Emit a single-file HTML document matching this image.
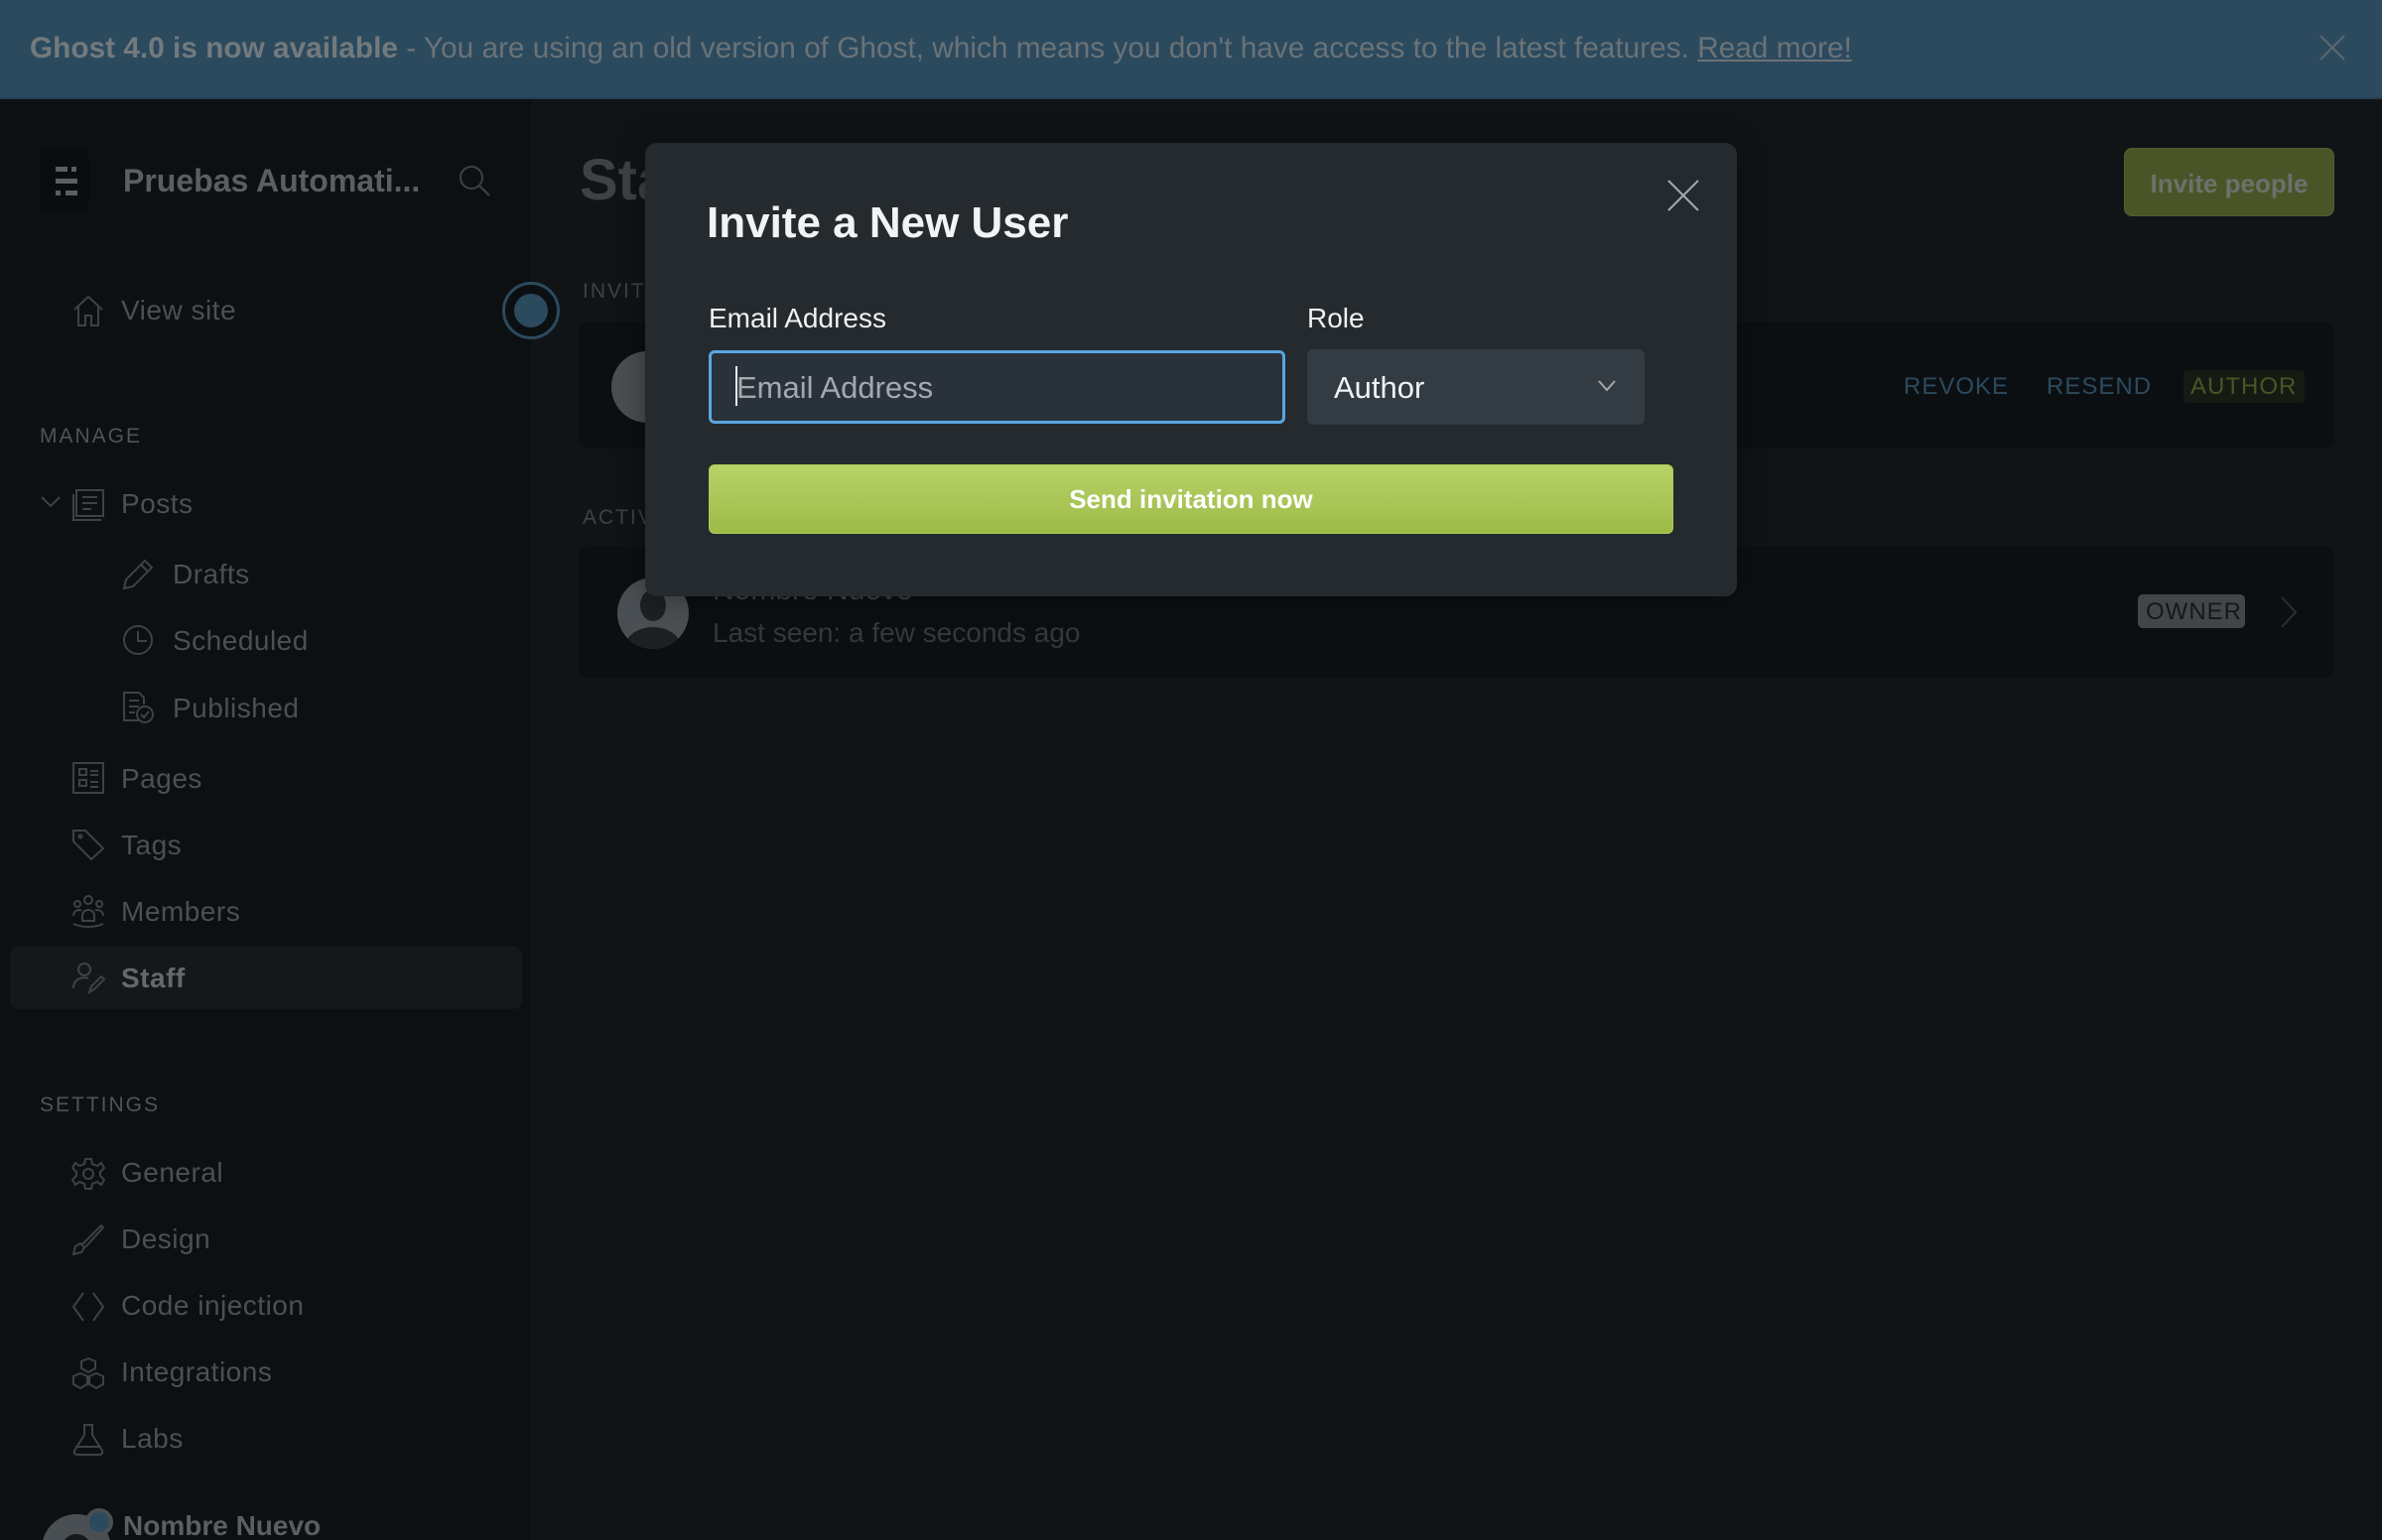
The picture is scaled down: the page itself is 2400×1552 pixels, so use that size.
<!DOCTYPE html>
<html><head><meta charset="utf-8"><style>
*{margin:0;padding:0;box-sizing:border-box}
html,body{width:2400px;height:1552px;overflow:hidden}
body{background:#101417;font-family:"Liberation Sans",sans-serif;position:relative}
.a{position:absolute;white-space:nowrap}
.banner{left:0;top:0;width:2400px;height:100px;background:#2c4a5e;border-bottom:2px solid #243f52}
.side{left:0;top:100px;width:535px;height:1452px;background:#0d1013}
.nav{font-size:28px;color:#4a5055;letter-spacing:.5px;line-height:34px}
.sec{font-size:21px;color:#4e5459;letter-spacing:2px}
svg.i{position:absolute;fill:none;stroke:#3c4247;stroke-width:2}
.card{background:#0c0f11;border-radius:10px}
#clip{position:absolute;left:0;top:0;width:2400px;height:1552px;overflow:hidden}
</style></head><body><div id="clip">
<div class="a banner"></div>
<div class="a" style="left:30px;top:32px;font-size:29.8px;color:#6a7377"><b style="color:#727a7d">Ghost 4.0 is now available</b> - You are using an old version of Ghost, which means you don't have access to the latest features. <u>Read more!</u></div>
<svg class="i" style="left:2336px;top:34px;stroke:#5b6870" width="28" height="28"><path d="M2 2L26 26M26 2L2 26"/></svg>

<div class="a side"></div>
<div class="a" style="left:40px;top:150px;width:50px;height:63px;background:#0a0c0e;border-radius:8px"></div>
<div class="a" style="left:56px;top:168px;width:12px;height:5px;background:#5a5f63"></div><div class="a" style="left:72px;top:168px;width:5px;height:5px;background:#5a5f63"></div>
<div class="a" style="left:56px;top:180px;width:22px;height:5px;background:#5a5f63"></div>
<div class="a" style="left:56px;top:192px;width:5px;height:5px;background:#5a5f63"></div><div class="a" style="left:66px;top:192px;width:12px;height:5px;background:#5a5f63"></div>
<div class="a" style="left:124px;top:164px;font-size:32px;font-weight:bold;color:#5a5f63">Pruebas Automati...</div>
<svg class="i" style="left:460px;top:164px" width="36" height="36"><circle cx="15" cy="15" r="11"/><path d="M23 23L33 33"/></svg>

<svg class="i" style="left:72px;top:296px" width="34" height="34"><path d="M3 16L17 3L31 16M7 13V32H14V22H20V32H27V13"/></svg>
<div class="a nav" style="left:122px;top:296px">View site</div>
<div class="a" style="left:506px;top:284px;width:58px;height:58px;border-radius:50%;border:3px solid #2c4a5e;background:#0c0f11"></div>
<div class="a" style="left:518px;top:296px;width:34px;height:34px;border-radius:50%;background:#2c4a5e"></div>

<div class="a sec" style="left:40px;top:428px">MANAGE</div>
<svg class="i" style="left:40px;top:498px" width="22" height="16"><path d="M2 3L11 12L20 3"/></svg>
<svg class="i" style="left:72px;top:492px" width="34" height="34"><rect x="5" y="2" width="27" height="26"/><path d="M2 6V32H30M11 9H26M11 15H26M11 21H20"/></svg>
<div class="a nav" style="left:122px;top:491px">Posts</div>
<svg class="i" style="left:122px;top:562px" width="34" height="34"><path d="M3 31L5 22L24 3L31 10L12 29ZM20 7L27 14"/></svg>
<div class="a nav" style="left:174px;top:562px">Drafts</div>
<svg class="i" style="left:122px;top:628px" width="34" height="34"><circle cx="17" cy="17" r="14"/><path d="M17 8V18H26"/></svg>
<div class="a nav" style="left:174px;top:629px">Scheduled</div>
<svg class="i" style="left:122px;top:696px" width="34" height="34"><path d="M18 30H3V2H18L23 7V14M8 10H18M8 16H18M8 22H14"/><circle cx="24" cy="24" r="8"/><path d="M20 24L23 27L28 21"/></svg>
<div class="a nav" style="left:174px;top:697px">Published</div>
<svg class="i" style="left:72px;top:767px" width="34" height="34"><rect x="2" y="2" width="30" height="30"/><rect x="8" y="8" width="7" height="6"/><rect x="8" y="19" width="7" height="6"/><path d="M19 10H27M19 14H27M19 21H27M19 26H27"/></svg>
<div class="a nav" style="left:122px;top:768px">Pages</div>
<svg class="i" style="left:72px;top:834px" width="34" height="34"><path d="M2 3H14L32 21L20 32L2 14Z"/><circle cx="9" cy="9" r="1.5"/></svg>
<div class="a nav" style="left:122px;top:835px">Tags</div>
<svg class="i" style="left:72px;top:901px" width="34" height="34"><circle cx="17" cy="6" r="4"/><circle cx="6" cy="10" r="3"/><circle cx="28" cy="10" r="3"/><path d="M11 22C11 14 23 14 23 22V27H11ZM2 22C2 16 9 15 10 17M32 22C32 16 25 15 24 17M2 30C10 34 24 34 32 30"/></svg>
<div class="a nav" style="left:122px;top:902px">Members</div>

<div class="a" style="left:10px;top:954px;width:516px;height:63px;background:#14181b;border-radius:8px"></div>
<svg class="i" style="left:72px;top:968px" width="34" height="34"><circle cx="13" cy="9" r="6"/><path d="M2 28C2 19 10 16 17 18M18 32L20 26L30 16L33 19L23 29Z"/></svg>
<div class="a nav" style="left:122px;top:969px;font-weight:bold;color:#65696c">Staff</div>

<div class="a sec" style="left:40px;top:1102px">SETTINGS</div>
<svg class="i" style="left:72px;top:1166px" width="34" height="34"><circle cx="17" cy="17" r="5"/><path d="M14 2H20L21 7L26 9L30 6L33 11L29 15V19L33 23L30 28L26 25L21 27L20 32H14L13 27L8 25L4 28L1 23L5 19V15L1 11L4 6L8 9L13 7Z"/></svg>
<div class="a nav" style="left:122px;top:1165px">General</div>
<svg class="i" style="left:72px;top:1232px" width="34" height="34"><path d="M2 32L4 24L9 21L13 25L10 30ZM11 22L30 3L32 5L14 25"/></svg>
<div class="a nav" style="left:122px;top:1232px">Design</div>
<svg class="i" style="left:72px;top:1300px" width="34" height="34"><path d="M12 3L2 17L12 31M22 3L32 17L22 31"/></svg>
<div class="a nav" style="left:122px;top:1299px">Code injection</div>
<svg class="i" style="left:72px;top:1367px" width="34" height="34"><path d="M17 2L24 5V12L17 16L10 12V5ZM9 17L16 20V28L9 32L2 28V20ZM25 17L32 20V28L25 32L18 28V20Z"/></svg>
<div class="a nav" style="left:122px;top:1366px">Integrations</div>
<svg class="i" style="left:72px;top:1434px" width="34" height="34"><path d="M12 2H22M13 2V12L3 28C2 31 4 32 6 32H28C30 32 32 31 31 28L21 12V2M4 24H30"/></svg>
<div class="a nav" style="left:122px;top:1433px">Labs</div>
<div class="a" style="left:42px;top:1526px;width:70px;height:70px;border-radius:50%;background:#4a4f53"></div>
<div class="a" style="left:62px;top:1546px;width:30px;height:30px;border-radius:50%;background:#16191c"></div>
<div class="a" style="left:86px;top:1520px;width:28px;height:28px;border-radius:50%;background:#2c4a5e;border:4px solid #4a4f53"></div>
<div class="a" style="left:124px;top:1522px;font-size:28px;font-weight:bold;color:#5a5f63">Nombre Nuevo</div>

<!-- main -->
<div class="a" style="left:584px;top:148px;font-size:58px;font-weight:bold;color:#3d4246">Staff</div>
<div class="a" style="left:2140px;top:149px;width:212px;height:69px;background:#4a5527;border-radius:8px;border:1px solid #525e2c"></div>
<div class="a" style="left:2140px;top:170px;width:212px;text-align:center;font-size:26px;font-weight:bold;color:#6c716d">Invite people</div>
<div class="a sec" style="left:587px;top:282px;color:#3c4246">INVITED USERS</div>
<div class="a card" style="left:583px;top:325px;width:1769px;height:127px"></div>
<div class="a" style="left:616px;top:354px;width:72px;height:72px;border-radius:50%;background:#4a4f53"></div>
<div class="a" style="left:1918px;top:376px;font-size:24px;color:#2c4a5e;letter-spacing:1px">REVOKE</div>
<div class="a" style="left:2062px;top:376px;font-size:24px;color:#2c4a5e;letter-spacing:1px">RESEND</div>
<div class="a" style="left:2200px;top:373px;width:122px;height:33px;background:#151a13;border-radius:4px"></div>
<div class="a" style="left:2207px;top:376px;font-size:24px;color:#4a5527;letter-spacing:1px">AUTHOR</div>
<div class="a sec" style="left:587px;top:510px;color:#3c4246">ACTIVE USERS</div>
<div class="a card" style="left:583px;top:551px;width:1769px;height:132px"></div>
<div class="a" style="left:622px;top:582px;width:72px;height:72px;border-radius:50%;background:#4a4f53;overflow:hidden"><div style="position:absolute;left:23px;top:12px;width:26px;height:32px;border-radius:50%;background:#1c2023"></div><div style="position:absolute;left:8px;top:50px;width:56px;height:40px;border-radius:50%;background:#1c2023"></div></div>
<div class="a" style="left:718px;top:578px;font-size:30px;color:#3d4246">Nombre Nuevo</div>
<div class="a" style="left:718px;top:622px;font-size:28px;color:#33383c">Last seen: a few seconds ago</div>
<div class="a" style="left:2154px;top:599px;width:108px;height:34px;background:#41464a;border-radius:5px"></div>
<div class="a" style="left:2162px;top:603px;font-size:24px;color:#15181a;letter-spacing:1px">OWNER</div>
<svg class="i" style="left:2296px;top:600px;stroke:#2a2f33" width="20" height="34"><path d="M3 2L17 17L3 32"/></svg>

<!-- modal -->
<div class="a" style="left:650px;top:144px;width:1100px;height:457px;background:#242a2e;border-radius:12px;box-shadow:0 0 30px rgba(0,0,0,.4)"></div>
<div class="a" style="left:712px;top:200px;font-size:44px;font-weight:bold;color:#f1f4f6">Invite a New User</div>
<svg class="i" style="left:1679px;top:180px;stroke:#a3a9ad" width="34" height="34"><path d="M2 2L32 32M32 2L2 32"/></svg>
<div class="a" style="left:714px;top:305px;font-size:28px;color:#eef1f3">Email Address</div>
<div class="a" style="left:1317px;top:305px;font-size:28px;color:#eef1f3">Role</div>
<div class="a" style="left:714px;top:353px;width:581px;height:74px;background:#29313a;border:3px solid #5aa6e0;border-radius:6px"></div>
<div class="a" style="left:741px;top:369px;width:2px;height:40px;background:#e8ecef"></div>
<div class="a" style="left:742px;top:373px;font-size:31px;color:#a2a9ae">Email Address</div>
<div class="a" style="left:1317px;top:352px;width:340px;height:76px;background:#333b43;border-radius:6px"></div>
<div class="a" style="left:1344px;top:373px;font-size:31px;color:#f0f2f4">Author</div>
<svg class="i" style="left:1610px;top:382px;stroke:#a3a9ad" width="18" height="14"><path d="M1 2L9 11L17 2"/></svg>
<div class="a" style="left:714px;top:468px;width:972px;height:70px;border-radius:6px;background:linear-gradient(#b7d268,#9dbb48);border:1px solid #aacb57"></div>
<div class="a" style="left:714px;top:488px;width:972px;text-align:center;font-size:26px;font-weight:bold;color:#fff">Send invitation now</div>
</div></body></html>
